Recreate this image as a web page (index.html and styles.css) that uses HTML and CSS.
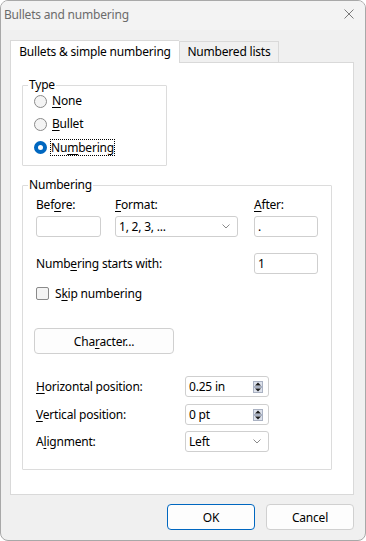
FILE: index.html
```html
<!DOCTYPE html>
<html lang="en">
  <head>
    <meta charset="UTF-8" />
    <title>Bullets and numbering</title>
    <link rel="stylesheet" href="styles.css">
  </head>
  <body>
    <div class="window">
      <div class="titlebar">
        <span class="title">Bullets and numbering</span>
        <svg class="close" width="12" height="12" viewBox="0 0 12 12">
          <path d="M1.5 1.5 L10.5 10.5 M10.5 1.5 L1.5 10.5" stroke="#7a7a7a" stroke-width="1" fill="none" />
        </svg>
      </div>

      <div class="content">
        <div class="tabs">
          <div class="tab active">Bullets &amp; simple numbering</div>
          <div class="tab">Numbered lists</div>
        </div>

        <div class="panel">
          <fieldset class="group type-group">
            <legend>Type</legend>
            <label class="radio"><span class="radio-mark"></span><span class="radio-text"><u>N</u>one</span></label>
            <label class="radio"><span class="radio-mark"></span><span class="radio-text"><u>B</u>ullet</span></label>
            <label class="radio checked"><span class="radio-mark"></span><span class="radio-text focus">Nu<u>m</u>bering</span></label>
          </fieldset>

          <fieldset class="group num-group">
            <legend>Numbering</legend>

            <div class="field-row">
              <div class="field before">
                <div class="lbl">Bef<u>o</u>re:</div>
                <div class="input"></div>
              </div>
              <div class="field format">
                <div class="lbl"><u>F</u>ormat:</div>
                <div class="input select">
                  <span>1, 2, 3, ...</span>
                  <svg class="chevron" width="8" height="5" viewBox="0 0 8 5"><path d="M0.5 0.5 L4 4 L7.5 0.5" stroke="#8a8a8a" fill="none" /></svg>
                </div>
              </div>
              <div class="field after">
                <div class="lbl"><u>A</u>fter:</div>
                <div class="input">.</div>
              </div>
            </div>

            <div class="line-row start-row">
              <span>Numb<u>e</u>ring starts with:</span>
              <div class="input small">1</div>
            </div>

            <label class="check-row">
              <span class="check-mark"></span>
              <span>S<u>k</u>ip numbering</span>
            </label>

            <button class="btn char-btn">Cha<u>r</u>acter...</button>

            <div class="line-row pos-row">
              <span><u>H</u>orizontal position:</span>
              <div class="input spin">
                <span>0.25 in</span>
                <svg class="spinner" width="10" height="12" viewBox="0 0 10 12">
                  <rect x="0.5" y="0.5" width="9" height="5" fill="#dde2ec" stroke="#a9b1c2" />
                  <rect x="0.5" y="6.5" width="9" height="5" fill="#dde2ec" stroke="#a9b1c2" />
                  <path d="M2 4.5 L5 1.5 L8 4.5 Z" fill="#1a1a1a" />
                  <path d="M2 7.5 L5 10.5 L8 7.5 Z" fill="#1a1a1a" />
                </svg>
              </div>
            </div>

            <div class="line-row pos-row vert">
              <span><u>V</u>ertical position:</span>
              <div class="input spin">
                <span>0 pt</span>
                <svg class="spinner" width="10" height="12" viewBox="0 0 10 12">
                  <rect x="0.5" y="0.5" width="9" height="5" fill="#dde2ec" stroke="#a9b1c2" />
                  <rect x="0.5" y="6.5" width="9" height="5" fill="#dde2ec" stroke="#a9b1c2" />
                  <path d="M2 4.5 L5 1.5 L8 4.5 Z" fill="#1a1a1a" />
                  <path d="M2 7.5 L5 10.5 L8 7.5 Z" fill="#1a1a1a" />
                </svg>
              </div>
            </div>

            <div class="line-row pos-row align">
              <span>A<u>l</u>ignment:</span>
              <div class="input select">
                <span>Left</span>
                <svg class="chevron" width="8" height="5" viewBox="0 0 8 5"><path d="M0.5 0.5 L4 4 L7.5 0.5" stroke="#8a8a8a" fill="none" /></svg>
              </div>
            </div>
          </fieldset>
        </div>

        <div class="buttons">
          <button class="btn dlg default">OK</button>
          <button class="btn dlg">Cancel</button>
        </div>
      </div>
    </div>
  </body>
</html>
```

FILE: styles.css
```css
* {
  box-sizing: border-box;
}
body {
  margin: 0;
  font-family: "Noto Sans", "Open Sans", sans-serif;
  font-size: 12px;
  letter-spacing: -0.2px;
  color: #000;
  background: #fff;
}
u {
  text-decoration-thickness: 1px;
  text-underline-offset: 2px;
}
.window {
  width: 366px;
  height: 541px;
  border: 1px solid #a8a8a8;
  border-radius: 8px;
  background: #f0f0f0;
  overflow: hidden;
}
.titlebar {
  height: 29px;
  background: #f3f3f3;
  display: flex;
  align-items: center;
  justify-content: space-between;
  padding: 0 10px 3px 3px;
}
.title {
  color: #6b6b6b;
}
.content {
  padding: 10px 11px 0 9px;
}
.tabs {
  display: flex;
  align-items: flex-end;
  height: 22px;
}
.tab {
  height: 21px;
  width: 100px;
  border: 1px solid #d9d9d9;
  border-bottom: none;
  background: #f0f0f0;
  line-height: 20px;
  text-align: center;
  white-space: nowrap;
}
.tab.active {
  position: relative;
  z-index: 1;
  width: 169px;
  height: 23px;
  margin-bottom: -1px;
  background: #fff;
  border-right: none;
  line-height: 22px;
}
.panel {
  height: 433px;
  background: #fff;
  border: 1px solid #d9d9d9;
  padding: 14px 0 0 11px;
}
.group {
  margin: 0;
  border: 1px solid #dcdcdc;
  border-radius: 1px;
  padding: 0;
}
.group legend {
  padding: 0 1px;
  line-height: 16px;
}
.type-group {
  width: 145px;
  padding: 0 0 10px 11px;
  display: flex;
  flex-direction: column;
  gap: 7px;
}
.type-group legend {
  margin-left: -6px;
}
.radio {
  display: flex;
  align-items: center;
  height: 16px;
}
.radio-mark {
  width: 13px;
  height: 13px;
  border: 1px solid #8a8a8a;
  border-radius: 50%;
  background: #f4f4f4;
  margin-right: 5px;
}
.radio.checked .radio-mark {
  border: 4px solid #0067c0;
  background: #fff;
}
.radio-text {
  padding: 0 1px 1px 1px;
  margin-left: -1px;
  line-height: 15px;
}
.radio-text.focus {
  border: 1px dotted #000;
  padding: 0;
  margin-left: -2px;
}
.num-group {
  width: 310px;
  margin-top: 11px;
  padding: 4px 0 17px 13px;
}
.num-group legend {
  margin-left: -8px;
}
.field-row {
  display: flex;
}
.lbl {
  line-height: 16px;
  margin-bottom: 3px;
}
.input {
  height: 21px;
  border: 1px solid #cfcfcf;
  border-radius: 3px;
  background: #fff;
  padding: 0 3px;
  line-height: 19px;
}
.before .input {
  width: 65px;
}
.format {
  margin-left: 14px;
}
.format .input {
  width: 123px;
}
.after {
  margin-left: 16px;
}
.after .input {
  width: 64px;
}
.select {
  display: flex;
  align-items: center;
  justify-content: space-between;
  padding-right: 7px;
}
.chevron {
  display: block;
}
.line-row {
  display: flex;
  align-items: center;
  justify-content: space-between;
}
.start-row {
  margin-top: 16px;
  width: 282px;
}
.input.small {
  width: 64px;
}
.check-row {
  display: flex;
  align-items: center;
  height: 16px;
  margin-top: 11px;
}
.check-mark {
  width: 13px;
  height: 13px;
  border: 1px solid #8a8a8a;
  border-radius: 2px;
  background: #f4f4f4;
  margin-right: 6px;
}
.btn {
  font-family: inherit;
  font-size: 12px;
  letter-spacing: inherit;
  color: #000;
  background: #fdfdfd;
  border: 1px solid #d0d0d0;
  border-radius: 4px;
  padding: 0;
}
.char-btn {
  display: block;
  width: 140px;
  height: 26px;
  margin: 27px 0 0 -2px;
}
.pos-row {
  width: 233px;
  margin-top: 22px;
}
.pos-row .input {
  width: 84px;
}
.pos-row.vert {
  margin-top: 7px;
}
.pos-row.align {
  margin-top: 6px;
}
.spin {
  display: flex;
  align-items: center;
  justify-content: space-between;
  padding-right: 5px;
}
.spinner {
  display: block;
}
.buttons {
  display: flex;
  justify-content: flex-end;
  gap: 11px;
  margin-top: 9px;
}
.dlg {
  width: 88px;
  height: 26px;
}
.dlg.default {
  border-color: #0067c0;
}
```
